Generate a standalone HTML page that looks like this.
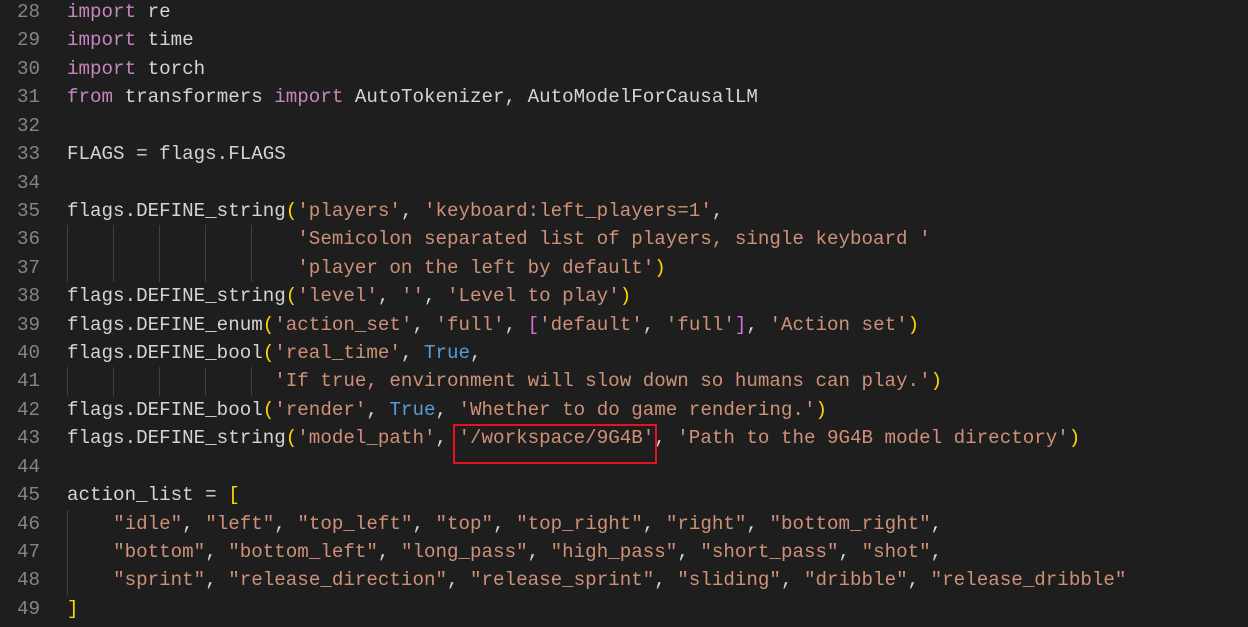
<!DOCTYPE html>
<html><head><meta charset="utf-8"><style>
body{margin:0;background:#1e1e1e;width:1248px;height:627px;overflow:hidden;position:relative}
.c{position:absolute;left:0;top:-2px;font-family:"Liberation Mono",monospace;font-size:19.2px;line-height:28.43px;color:#d4d4d4;white-space:normal}
.l{height:28.43px;position:relative;white-space:pre}
.n{display:inline-block;width:40px;text-align:right;color:#858585;margin-right:27px}
.k{color:#c586c0}.s{color:#ce9178}.b{color:#569cd6}.y{color:#ffd700}.p{color:#da70d6}
.g{position:absolute;top:0;width:1px;height:28.43px;background:#404040}
.box{position:absolute;left:453px;top:424px;width:200px;height:36px;border:2px solid #e81123}
</style></head><body>
<div class="c"><div class="l"><span class="n">28</span><span class="k">import</span> re</div><div class="l"><span class="n">29</span><span class="k">import</span> time</div><div class="l"><span class="n">30</span><span class="k">import</span> torch</div><div class="l"><span class="n">31</span><span class="k">from</span> transformers <span class="k">import</span> AutoTokenizer, AutoModelForCausalLM</div><div class="l"><span class="n">32</span></div><div class="l"><span class="n">33</span>FLAGS = flags.FLAGS</div><div class="l"><span class="n">34</span></div><div class="l"><span class="n">35</span>flags.DEFINE_string<span class="y">(</span><span class="s">'players'</span>, <span class="s">'keyboard:left_players=1'</span>,</div><div class="l"><span class="g" style="left:67px"></span><span class="g" style="left:113px"></span><span class="g" style="left:159px"></span><span class="g" style="left:205px"></span><span class="g" style="left:251px"></span><span class="n">36</span>                    <span class="s">'Semicolon separated list of players, single keyboard '</span></div><div class="l"><span class="g" style="left:67px"></span><span class="g" style="left:113px"></span><span class="g" style="left:159px"></span><span class="g" style="left:205px"></span><span class="g" style="left:251px"></span><span class="n">37</span>                    <span class="s">'player on the left by default'</span><span class="y">)</span></div><div class="l"><span class="n">38</span>flags.DEFINE_string<span class="y">(</span><span class="s">'level'</span>, <span class="s">''</span>, <span class="s">'Level to play'</span><span class="y">)</span></div><div class="l"><span class="n">39</span>flags.DEFINE_enum<span class="y">(</span><span class="s">'action_set'</span>, <span class="s">'full'</span>, <span class="p">[</span><span class="s">'default'</span>, <span class="s">'full'</span><span class="p">]</span>, <span class="s">'Action set'</span><span class="y">)</span></div><div class="l"><span class="n">40</span>flags.DEFINE_bool<span class="y">(</span><span class="s">'real_time'</span>, <span class="b">True</span>,</div><div class="l"><span class="g" style="left:67px"></span><span class="g" style="left:113px"></span><span class="g" style="left:159px"></span><span class="g" style="left:205px"></span><span class="g" style="left:251px"></span><span class="n">41</span>                  <span class="s">'If true, environment will slow down so humans can play.'</span><span class="y">)</span></div><div class="l"><span class="n">42</span>flags.DEFINE_bool<span class="y">(</span><span class="s">'render'</span>, <span class="b">True</span>, <span class="s">'Whether to do game rendering.'</span><span class="y">)</span></div><div class="l"><span class="n">43</span>flags.DEFINE_string<span class="y">(</span><span class="s">'model_path'</span>, <span class="s">'/workspace/9G4B'</span>, <span class="s">'Path to the 9G4B model directory'</span><span class="y">)</span></div><div class="l"><span class="n">44</span></div><div class="l"><span class="n">45</span>action_list = <span class="y">[</span></div><div class="l"><span class="g" style="left:67px"></span><span class="n">46</span>    <span class="s">"idle"</span>, <span class="s">"left"</span>, <span class="s">"top_left"</span>, <span class="s">"top"</span>, <span class="s">"top_right"</span>, <span class="s">"right"</span>, <span class="s">"bottom_right"</span>,</div><div class="l"><span class="g" style="left:67px"></span><span class="n">47</span>    <span class="s">"bottom"</span>, <span class="s">"bottom_left"</span>, <span class="s">"long_pass"</span>, <span class="s">"high_pass"</span>, <span class="s">"short_pass"</span>, <span class="s">"shot"</span>,</div><div class="l"><span class="g" style="left:67px"></span><span class="n">48</span>    <span class="s">"sprint"</span>, <span class="s">"release_direction"</span>, <span class="s">"release_sprint"</span>, <span class="s">"sliding"</span>, <span class="s">"dribble"</span>, <span class="s">"release_dribble"</span></div><div class="l"><span class="n">49</span><span class="y">]</span></div></div>
<div class="box"></div>
</body></html>
